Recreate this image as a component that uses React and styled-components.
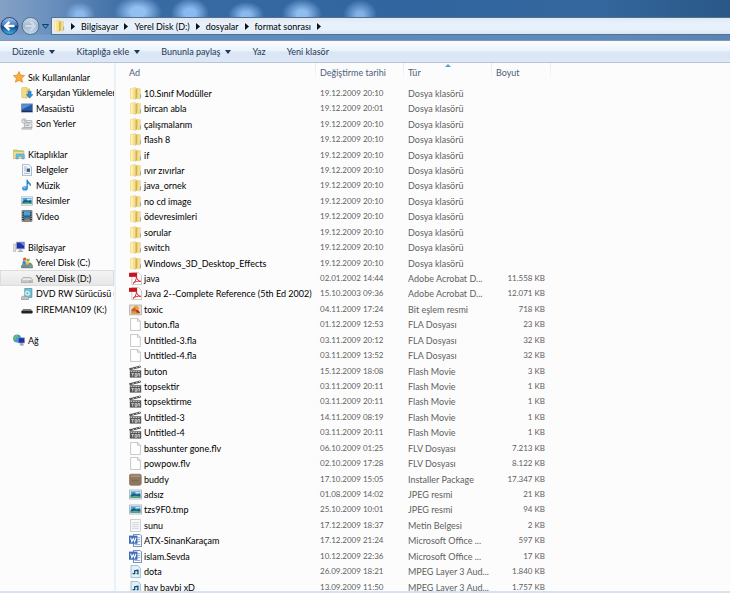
import React, { useState } from "react";
import styled, { createGlobalStyle } from "styled-components";

const GlobalStyle = createGlobalStyle`
  * {
    box-sizing: border-box;
  }
  body {
    margin: 0;
    font-family: Lato, "Noto Sans", sans-serif;
    font-size: 9px;
    line-height: 15px;
    color: #000;
    background: #fcfcfc;
  }
  button {
    font: inherit;
    color: inherit;
    padding: 0;
    border: none;
    background: none;
    white-space: nowrap;
  }
  a {
    color: inherit;
    text-decoration: none;
  }
  svg {
    display: block;
    flex: none;
  }
`;

const Window = styled.div`
  display: flex;
  flex-direction: column;
  height: 100vh;
  overflow: hidden;
  border-bottom: 2px solid #d6e2f0;
`;

const Glass = styled.header`
  padding: 17px 0 5px;
  border-bottom: 1px solid #8796ab;
  background:
    radial-gradient(ellipse 15px 13px at 80px 15px, #8ab9ee 25%, transparent),
    radial-gradient(ellipse 24px 16px at 138px 12px, #93c0f2 30%, transparent),
    radial-gradient(ellipse 19px 15px at 190px 13px, #8abaf0 30%, transparent),
    radial-gradient(ellipse 18px 13px at 246px 15px, #88b8ee 25%, transparent),
    radial-gradient(ellipse 20px 15px at 302px 14px, #8ebdf0 25%, transparent),
    radial-gradient(ellipse 17px 15px at 360px 15px, #82b1e8 20%, transparent),
    linear-gradient(transparent 34px, rgba(125, 170, 215, 0.55) 35px),
    linear-gradient(90deg, #84a1c5, #6a90be 50px, #3a6ba3 130px, #30659f 400px, #34679d 600px, #2a5788);
`;

const AddressRow = styled.div`
  display: flex;
  align-items: center;
  height: 18px;
`;

const NavButton = styled.button`
  width: 19px;
  height: 18px;
  margin-right: 2px;
`;

const RecentButton = styled.button`
  width: 8px;
  margin-right: 1px;
`;

const AddressBar = styled.nav`
  display: flex;
  flex: 1;
  align-items: center;
  height: 18px;
  padding-left: 1px;
  border: 1px solid #56708f;
  border-right: none;
  background: linear-gradient(#dfe9f4, #e9f2fc 6px, #e6f0fa 12px, #dce6f0);
`;

const Crumb = styled.button`
  padding: 0 5px;
`;

const Toolbar = styled.div`
  display: flex;
  flex: none;
  gap: 21px;
  height: 22px;
  padding: 0 12px;
  color: #1e395b;
  border-bottom: 1px solid #b4c4da;
  background: linear-gradient(#fbfdff, #e9f2fb 10px, #dbe6f4 11px, #dde7f5);
`;

const ToolButton = styled.button`
  display: flex;
  align-items: center;
  gap: 5px;
`;

const Main = styled.div`
  position: relative;
  display: flex;
  flex: 1;
  min-height: 0;
`;

const SideBar = styled.aside`
  flex: none;
  width: 116px;
  padding-top: 6px;
  overflow: hidden;
  border-right: 2px solid #eaf2f9;
`;

const Group = styled.ul`
  margin: 0 0 15px;
  padding: 0;
  list-style: none;
`;

const SideItem = styled.li`
  height: 15px;
  &:nth-child(odd) {
    height: 16px;
  }
  a {
    display: flex;
    align-items: center;
    gap: 3px;
    height: 100%;
    padding-left: ${(props) => (props.$root ? 13 : 21)}px;
    white-space: nowrap;
    background: ${(props) =>
      props.$selected ? "linear-gradient(#f5f5f5, #e6e6e6)" : "none"};
    box-shadow: ${(props) =>
      props.$selected ? "inset 0 0 0 1px #dcdcdc" : "none"};
  }
`;

const Content = styled.main`
  flex: 1;
  overflow: hidden;
`;

const FileTable = styled.table`
  width: 435px;
  table-layout: fixed;
  border-collapse: collapse;
  th,
  td {
    padding: 0 0 0 4px;
    text-align: left;
    font-weight: normal;
    white-space: nowrap;
  }
  th:first-child,
  td:first-child {
    padding-left: 13px;
  }
  tbody tr {
    height: 15px;
    color: #5f5f5f;
  }
  tbody tr:nth-child(7n + 1),
  tbody tr:nth-child(7n + 3),
  tbody tr:nth-child(7n + 5) {
    height: 16px;
  }
`;

const NameCol = styled.col`
  width: 200px;
`;

const Col = styled.col`
  width: 88px;
`;

const HeadCell = styled.th`
  position: relative;
  height: 22px;
  vertical-align: top;
  color: #4c607a;
  background: linear-gradient(#dfeaf5, #fcfcfc 18px) right / 1px 100% no-repeat;
  button {
    display: block;
    padding: 2px 0;
  }
`;

const SortArrow = styled.svg`
  position: absolute;
  top: 1px;
  left: 50%;
  margin-left: -3px;
`;

const FileName = styled.div`
  display: flex;
  align-items: center;
  gap: 2px;
  height: 15px;
  color: #000;
`;

const DateCell = styled.td`
  font-size: 8px;
`;

const SizeCell = styled.td`
  font-size: 8px;
  && {
    padding-right: 6px;
    text-align: right;
  }
`;

const Watermark = styled.div`
  position: absolute;
  top: 362px;
  left: 229px;
  font: bold 22px "DejaVu Sans", sans-serif;
  color: rgba(0, 0, 0, 0.012);
  pointer-events: none;
`;

const iconShapes = {
  folder: (
    <>
      <path d="M2 2l6-1.500V15l-6-1z" fill="#f3dd86" stroke="#e3c871" strokeWidth=".6" />
      <path d="M1.500 1.500H8v13H1.500z" fill="#f5e08d" />
      <path d="M8 2.500l2.500-1.500v12.500L8 15.500z" fill="#d4b050" />
      <path d="M3.500 2v12" stroke="#fff4bd" strokeWidth="2" />
      <path d="M10.500 2h3.500v12.500h-3.500z" fill="#f4de8c" stroke="#dfc36a" strokeWidth=".5" />
      <path d="M14.200 9v4.500" stroke="#68a9b8" />
    </>
  ),
  pdf: (
    <>
      <path d="M3.500.5h8l4 4v11h-12z" fill="#fff" stroke="#bbb" />
      <path d="M0 1h10v5H0z" fill="#c9161d" />
      <path d="M5 14c3-2 4.500-6 4-8.500 1 4 3 6 5.500 6-4-.8-7 .5-9.500 2.500z" fill="none" stroke="#d8232a" strokeWidth="1.200" />
    </>
  ),
  bitmap: (
    <>
      <path d="M.5 2.500h15v12H.5z" fill="#e9dcc9" stroke="#a9a9a9" />
      <path d="M3 8l5-4 5 7v2H3z" fill="#d3552e" />
      <path d="M6 4l4-1 3 4-4 2z" fill="#e9a13a" />
      <path d="M3 10h5l2 3H3z" fill="#c9a53a" />
      <path d="M9 9l4 3" stroke="#8f2f1d" strokeWidth="1.500" />
    </>
  ),
  blank: <path d="M2 .5h8.500L14 4v11.500H2zM10.500.5V4H14" fill="#fefefe" stroke="#b3b3b3" strokeWidth=".9" />,
  movie: (
    <>
      <path d="M0 4l14-3.500 1 2.500L1 6.500z" fill="#555" />
      <path d="M4 3l2 2M8.500 2l2 2M12 1l2 2" stroke="#eee" />
      <path d="M1 6.500h14v9H1z" fill="#555" />
      <path d="M2 8h12" stroke="#ddd" strokeDasharray="2 1" />
      <path d="M3 10.500h3M4.500 10.500V14M7.500 10.500h2V14h-2zM11 14v-3.500h2V14" fill="none" stroke="#ddd" />
    </>
  ),
  installer: (
    <>
      <rect x=".5" y="1.500" width="14.500" height="13.500" rx="2" fill="#91765e" stroke="#8c745f" />
      <path d="M2 4h12" stroke="#ad927a" strokeWidth="2" />
      <path d="M4 9.500h8" stroke="#5e4938" strokeDasharray="1 1" />
    </>
  ),
  image: (
    <>
      <path d="M.5 2.500h15v11H.5z" fill="#fff" stroke="#9aa5ad" />
      <path d="M2 4h12v8H2z" fill="#4ba3d8" />
      <path d="M2 9l4-3 3 2 5-1v5H2z" fill="#1c5d78" />
      <path d="M2 10.500l6-1 6 1V12H2z" fill="#5fae8b" />
      <path d="M8 5h5v1.500H8z" fill="#d8f0fb" />
    </>
  ),
  text: (
    <>
      <path d="M2 .5h12v15H2z" fill="#fafafa" stroke="#c0c0c0" />
      <path d="M4 4.500h8M4 7h8M4 9.500h8M4 12h8" stroke="#c3ccd4" />
    </>
  ),
  word: (
    <>
      <path d="M5.500.5h8l2 2v13h-10z" fill="#fff" stroke="#4a6ba8" />
      <path d="M11 4.500h3M11 7h3M11 9.500h3M7 13h7" stroke="#7d98ca" />
      <path d="M0 2h10.500v10H0z" fill="#3f6cb8" />
      <path d="M2 4.500L3.500 9.500 5.200 5.500 7 9.500 8.500 4.500" fill="none" stroke="#fff" strokeWidth="1.300" />
    </>
  ),
  audio: (
    <>
      <path d="M2.500.5h8.500L14 4v11.500H2.500z" fill="#dff0fa" stroke="#8fb1c9" />
      <path d="M4.500 10.500h2.500V7l4-.5v4H9.500" fill="none" stroke="#1c4568" strokeWidth="1.500" />
    </>
  ),
  star: <path d="M8 .7l2.200 4.800 5.300.6-3.900 3.600 1.100 5.300L8 12.400 3.300 15l1.100-5.300L.5 6.100l5.300-.6z" fill="#f9ae3c" stroke="#dd7d1b" strokeWidth=".9" />,
  downloads: (
    <>
      <path d="M1 1l7-.5V15l-7-1z" fill="#f2dc88" stroke="#cfae52" strokeWidth=".7" />
      <path d="M8 2h4v12H8z" fill="#e6c666" />
      <path d="M9.500 5.500h4V10H16l-4.500 5L7 10h2.500z" fill="#2a8cd8" stroke="#1767a8" strokeWidth=".6" />
    </>
  ),
  desktop: (
    <>
      <path d="M.5 2.500h15v11H.5z" fill="#2558a5" stroke="#8391a5" />
      <path d="M1 3h14L1 10z" fill="#5b8fd4" />
      <path d="M1 12.500h14" stroke="#1d2e4b" strokeWidth="1.500" />
    </>
  ),
  recent: (
    <>
      <path d="M4.500 3.500h10v9h-10z" fill="#eef1f4" stroke="#98a0a8" />
      <path d="M6 6h7M6 8h7M6 10h5" stroke="#8e9dab" />
      <circle cx="4" cy="4" r="3" fill="#eee" stroke="#9a9a9a" />
      <path d="M4 2.500V4h1.500" fill="none" stroke="#666" strokeWidth=".7" />
      <path d="M2 12.500h13l-1 2.500H1z" fill="#c4cace" stroke="#90979e" strokeWidth=".6" />
    </>
  ),
  libraries: (
    <>
      <path d="M.5 2.500h5l1 1.500h8v10H.5z" fill="#f4de8c" stroke="#c9aa50" strokeWidth=".8" />
      <path d="M1 4h12.500" stroke="#8fc46f" strokeWidth="1.500" />
      <path d="M4 14.500V9q0-1 1-1h9q1 0 1 1v5.500h-3V11H7v3.500z" fill="#6cc0e8" stroke="#3b8fbd" strokeWidth=".7" />
    </>
  ),
  documents: (
    <>
      <path d="M2 .5h8.500L14 4v11.500H2z" fill="#f5f8fb" stroke="#93a3b3" />
      <path d="M4 4h4M4 6.500h3M4 12.500h8" stroke="#8fa5bd" />
      <path d="M7.500 6H12v4.500H7.500z" fill="#355f96" />
      <path d="M4 9h2.500" stroke="#8fa5bd" />
    </>
  ),
  music: (
    <>
      <path d="M8 1c1 3.500 5.500 3.500 4.500 8-.5-2-2-3-4.500-3.200" fill="#2a94dc" stroke="#1f7fc4" />
      <path d="M8.200 1v11" stroke="#1f7fc4" strokeWidth="1.600" />
      <ellipse cx="5.300" cy="12.500" rx="3.800" ry="2.800" fill="#2d95dc" />
      <ellipse cx="4.500" cy="11.800" rx="1.600" ry="1" fill="#9fd6f7" />
    </>
  ),
  video: (
    <>
      <path d="M1 .5h14v15H1z" fill="#2b3a45" />
      <path d="M4 1.500h8v6H4z" fill="#4aa3d6" />
      <path d="M4 8.500h8v6H4z" fill="#2f79ad" />
      <path d="M4 14.500l3-3 5 1v2z" fill="#c87945" />
      <path d="M2.500 1.500v14M13.500 1.500v14" stroke="#e5eaee" strokeWidth="1.300" strokeDasharray="1.500 1.500" />
    </>
  ),
  computer: (
    <>
      <path d="M.5 4h3v10h-3z" fill="#e2e5e8" stroke="#9ba1a8" strokeWidth=".7" />
      <path d="M4.500 1.500h11v9h-11z" fill="#2233a8" stroke="#a5adb8" />
      <path d="M9 2h6v5z" fill="#6b8be0" />
      <path d="M8.500 11h3v2h2v1.500h-7V13h2z" fill="#a9b0b8" />
    </>
  ),
  systemDisk: (
    <>
      <path d="M3 9l1-1h9l2.500 3.500v3H.5v-3z" fill="#6e9291" stroke="#65696c" strokeWidth=".7" />
      <path d="M3 1.500q2-1.500 4 0L6.500 5q-2-1-4 0z" fill="#e8572a" />
      <path d="M7.700 2q2 1 4 0L11 5.500q-2 1-4 0z" fill="#72b840" />
      <path d="M2.300 5.700q2-1 4 0l-.5 3.500q-2-1-4 0z" fill="#2f86d8" />
      <path d="M6.900 6.200q2 1 4 0l-.5 3.500q-2 1-4 0z" fill="#f7bd30" />
      <path d="M11.500 12.500h2" stroke="#7df07a" />
    </>
  ),
  disk: (
    <>
      <path d="M3 7.500h10l2.500 3v3.500H.5v-3.500z" fill="#e9e9e9" stroke="#858585" strokeWidth=".8" />
      <path d="M.8 10.800h14.400v2.900H.8z" fill="#c4c6c6" />
      <path d="M11.500 12.300h2" stroke="#49b749" strokeWidth="1.200" />
    </>
  ),
  dvd: (
    <>
      <path d="M5 .5h9.500v12H5z" fill="#6cc3d0" stroke="#4493a5" />
      <circle cx="8.500" cy="7" r="4" fill="#d8eef3" stroke="#72b3c2" />
      <circle cx="8.500" cy="7" r="1.200" fill="#59a7b8" />
      <path d="M1.500 11h7l1.500 2v2.500H.5V13z" fill="#c0c4c7" stroke="#7c8185" strokeWidth=".7" />
    </>
  ),
  removable: (
    <>
      <path d="M3 8h10l2.500 2.500H.5z" fill="#777" />
      <path d="M.5 10.500h15V13q0 1-1 1h-13q-1 0-1-1z" fill="#222" />
    </>
  ),
  network: (
    <>
      <circle cx="5.500" cy="6" r="5" fill="#3aa0de" stroke="#2978b8" strokeWidth=".6" />
      <path d="M2 3q3-3 5-1 0 3-3 3l-1 4Q0 6 2 3z" fill="#6cc24a" />
      <path d="M7 5h8.500v7H7z" fill="#1f33a6" stroke="#9aa6bd" strokeWidth=".8" />
      <path d="M10 12h3v2h1.500v1.300H9V14h1z" fill="#8f9bab" />
    </>
  ),
};

function Icon({ name, size = 12 }) {
  return (
    <svg width={size} height={size} viewBox="0 0 16 16" aria-hidden="true">
      {iconShapes[name]}
    </svg>
  );
}

function DownArrow() {
  return (
    <svg width="6" height="4" viewBox="0 0 6 4" aria-hidden="true">
      <path d="M0 0h6L3 4z" fill="#1e395b" />
    </svg>
  );
}

function CrumbArrow() {
  return (
    <svg width="6" height="7" viewBox="0 0 6 7" aria-hidden="true">
      <path d="M1 0l4 3.500L1 7z" fill="#111" />
    </svg>
  );
}

const crumbs = ["Bilgisayar", "Yerel Disk (D:)", "dosyalar", "format sonrası"];

const tools = [
  { label: "Düzenle", menu: true },
  { label: "Kitaplığa ekle", menu: true },
  { label: "Bununla paylaş", menu: true },
  { label: "Yaz" },
  { label: "Yeni klasör" },
];

const groups = [
  [
    ["star", "Sık Kullanılanlar"],
    ["downloads", "Karşıdan Yüklemeler"],
    ["desktop", "Masaüstü"],
    ["recent", "Son Yerler"],
  ],
  [
    ["libraries", "Kitaplıklar"],
    ["documents", "Belgeler"],
    ["music", "Müzik"],
    ["image", "Resimler"],
    ["video", "Video"],
  ],
  [
    ["computer", "Bilgisayar"],
    ["systemDisk", "Yerel Disk (C:)"],
    ["disk", "Yerel Disk (D:)"],
    ["dvd", "DVD RW Sürücüsü (E:)"],
    ["removable", "FIREMAN109 (K:)"],
  ],
  [["network", "Ağ"]],
];

const files = [
  ["folder", "10.Sınıf Modüller", "19.12.2009 20:10", "Dosya klasörü", ""],
  ["folder", "bircan abla", "19.12.2009 20:01", "Dosya klasörü", ""],
  ["folder", "çalışmalarım", "19.12.2009 20:10", "Dosya klasörü", ""],
  ["folder", "flash 8", "19.12.2009 20:10", "Dosya klasörü", ""],
  ["folder", "if", "19.12.2009 20:10", "Dosya klasörü", ""],
  ["folder", "ıvır zıvırlar", "19.12.2009 20:10", "Dosya klasörü", ""],
  ["folder", "java_ornek", "19.12.2009 20:10", "Dosya klasörü", ""],
  ["folder", "no cd image", "19.12.2009 20:10", "Dosya klasörü", ""],
  ["folder", "ödevresimleri", "19.12.2009 20:10", "Dosya klasörü", ""],
  ["folder", "sorular", "19.12.2009 20:10", "Dosya klasörü", ""],
  ["folder", "switch", "19.12.2009 20:10", "Dosya klasörü", ""],
  ["folder", "Windows_3D_Desktop_Effects", "19.12.2009 20:10", "Dosya klasörü", ""],
  ["pdf", "java", "02.01.2002 14:44", "Adobe Acrobat D...", "11.558 KB"],
  ["pdf", "Java 2--Complete Reference (5th Ed 2002)", "15.10.2003 09:36", "Adobe Acrobat D...", "12.071 KB"],
  ["bitmap", "toxic", "04.11.2009 17:24", "Bit eşlem resmi", "718 KB"],
  ["blank", "buton.fla", "01.12.2009 12:53", "FLA Dosyası", "23 KB"],
  ["blank", "Untitled-3.fla", "03.11.2009 20:12", "FLA Dosyası", "32 KB"],
  ["blank", "Untitled-4.fla", "03.11.2009 13:52", "FLA Dosyası", "32 KB"],
  ["movie", "buton", "15.12.2009 18:08", "Flash Movie", "3 KB"],
  ["movie", "topsektir", "03.11.2009 20:11", "Flash Movie", "1 KB"],
  ["movie", "topsektirme", "03.11.2009 20:11", "Flash Movie", "1 KB"],
  ["movie", "Untitled-3", "14.11.2009 08:19", "Flash Movie", "1 KB"],
  ["movie", "Untitled-4", "03.11.2009 20:11", "Flash Movie", "1 KB"],
  ["blank", "basshunter gone.flv", "06.10.2009 01:25", "FLV Dosyası", "7.213 KB"],
  ["blank", "powpow.flv", "02.10.2009 17:28", "FLV Dosyası", "8.122 KB"],
  ["installer", "buddy", "17.10.2009 15:05", "Installer Package", "17.347 KB"],
  ["image", "adsız", "01.08.2009 14:02", "JPEG resmi", "21 KB"],
  ["image", "tzs9F0.tmp", "25.10.2009 10:01", "JPEG resmi", "94 KB"],
  ["text", "sunu", "17.12.2009 18:37", "Metin Belgesi", "2 KB"],
  ["word", "ATX-SinanKaraçam", "17.12.2009 21:24", "Microsoft Office ...", "597 KB"],
  ["word", "islam.Sevda", "10.12.2009 22:36", "Microsoft Office ...", "17 KB"],
  ["audio", "dota", "26.09.2009 18:21", "MPEG Layer 3 Aud...", "1.840 KB"],
  ["audio", "hay baybi xD", "13.09.2009 11:50", "MPEG Layer 3 Aud...", "1.757 KB"],
];

const columns = ["Ad", "Değiştirme tarihi", "Tür", "Boyut"];

export default function App() {
  const [selected, setSelected] = useState("disk");

  return (
    <Window>
      <GlobalStyle />
      <Glass>
        <AddressRow>
          <NavButton aria-label="Geri">
            <svg width="19" height="18" viewBox="0 0 19 18">
              <defs>
                <linearGradient id="back" x2="0" y2="1">
                  <stop offset="0" stopColor="#a9c6ea" />
                  <stop offset=".48" stopColor="#3b74bd" />
                  <stop offset=".52" stopColor="#0d3c86" />
                  <stop offset="1" stopColor="#3dc0ee" />
                </linearGradient>
              </defs>
              <circle cx="9.500" cy="9" r="8.500" fill="url(#back)" stroke="#23436e" />
              <path d="M14.500 9H6M9.500 4.800L5.200 9l4.300 4.200" fill="none" stroke="#fff" strokeWidth="2.400" />
            </svg>
          </NavButton>
          <NavButton aria-label="İleri">
            <svg width="19" height="18" viewBox="0 0 19 18">
              <defs>
                <linearGradient id="forward" x2="0" y2="1">
                  <stop offset="0" stopColor="#d3deea" />
                  <stop offset=".5" stopColor="#a3b8d0" />
                  <stop offset="1" stopColor="#c9d9e9" />
                </linearGradient>
              </defs>
              <circle cx="9.500" cy="9" r="8.500" fill="url(#forward)" stroke="#516e92" />
              <path d="M4.500 9H13M9.500 4.800L13.800 9l-4.300 4.200" fill="none" stroke="#cfdceb" strokeWidth="2" />
            </svg>
          </NavButton>
          <RecentButton aria-label="Son sayfalar">
            <svg width="7" height="5" viewBox="0 0 7 5">
              <path d="M.5.5h6l-3 4z" fill="#3d9ed2" stroke="#123f6b" />
            </svg>
          </RecentButton>
          <AddressBar>
            <Icon name="folder" />
            <Crumb aria-label="Konumlar">
              <CrumbArrow />
            </Crumb>
            {crumbs.map((crumb) => (
              <React.Fragment key={crumb}>
                <button>{crumb}</button>
                <Crumb aria-label={crumb}>
                  <CrumbArrow />
                </Crumb>
              </React.Fragment>
            ))}
          </AddressBar>
        </AddressRow>
      </Glass>
      <Toolbar>
        {tools.map((tool) => (
          <ToolButton key={tool.label}>
            {tool.label}
            {tool.menu && <DownArrow />}
          </ToolButton>
        ))}
      </Toolbar>
      <Main>
        <SideBar>
          {groups.map((group) => (
            <Group key={group[0][0]}>
              {group.map(([icon, label], i) => (
                <SideItem key={icon} $root={i === 0} $selected={selected === icon}>
                  <a href="#" onClick={() => setSelected(icon)}>
                    <Icon name={icon} />
                    {label}
                  </a>
                </SideItem>
              ))}
            </Group>
          ))}
        </SideBar>
        <Content>
          <FileTable>
            <colgroup>
              <NameCol />
              <Col />
              <Col />
              <col />
            </colgroup>
            <thead>
              <tr>
                {columns.map((column) => (
                  <HeadCell key={column}>
                    <button>{column}</button>
                    {column === "Tür" && (
                      <SortArrow width="6" height="3" viewBox="0 0 6 3">
                        <path d="M0 3l3-3 3 3z" fill="#5f9dc6" />
                      </SortArrow>
                    )}
                  </HeadCell>
                ))}
              </tr>
            </thead>
            <tbody>
              {files.map(([icon, name, date, type, size]) => (
                <tr key={icon + name}>
                  <td>
                    <FileName>
                      <Icon name={icon} size={13} />
                      {name}
                    </FileName>
                  </td>
                  <DateCell>{date}</DateCell>
                  <td>{type}</td>
                  <SizeCell>{size}</SizeCell>
                </tr>
              ))}
            </tbody>
          </FileTable>
        </Content>
        <Watermark aria-hidden="true">dijitalders.com</Watermark>
      </Main>
    </Window>
  );
}
